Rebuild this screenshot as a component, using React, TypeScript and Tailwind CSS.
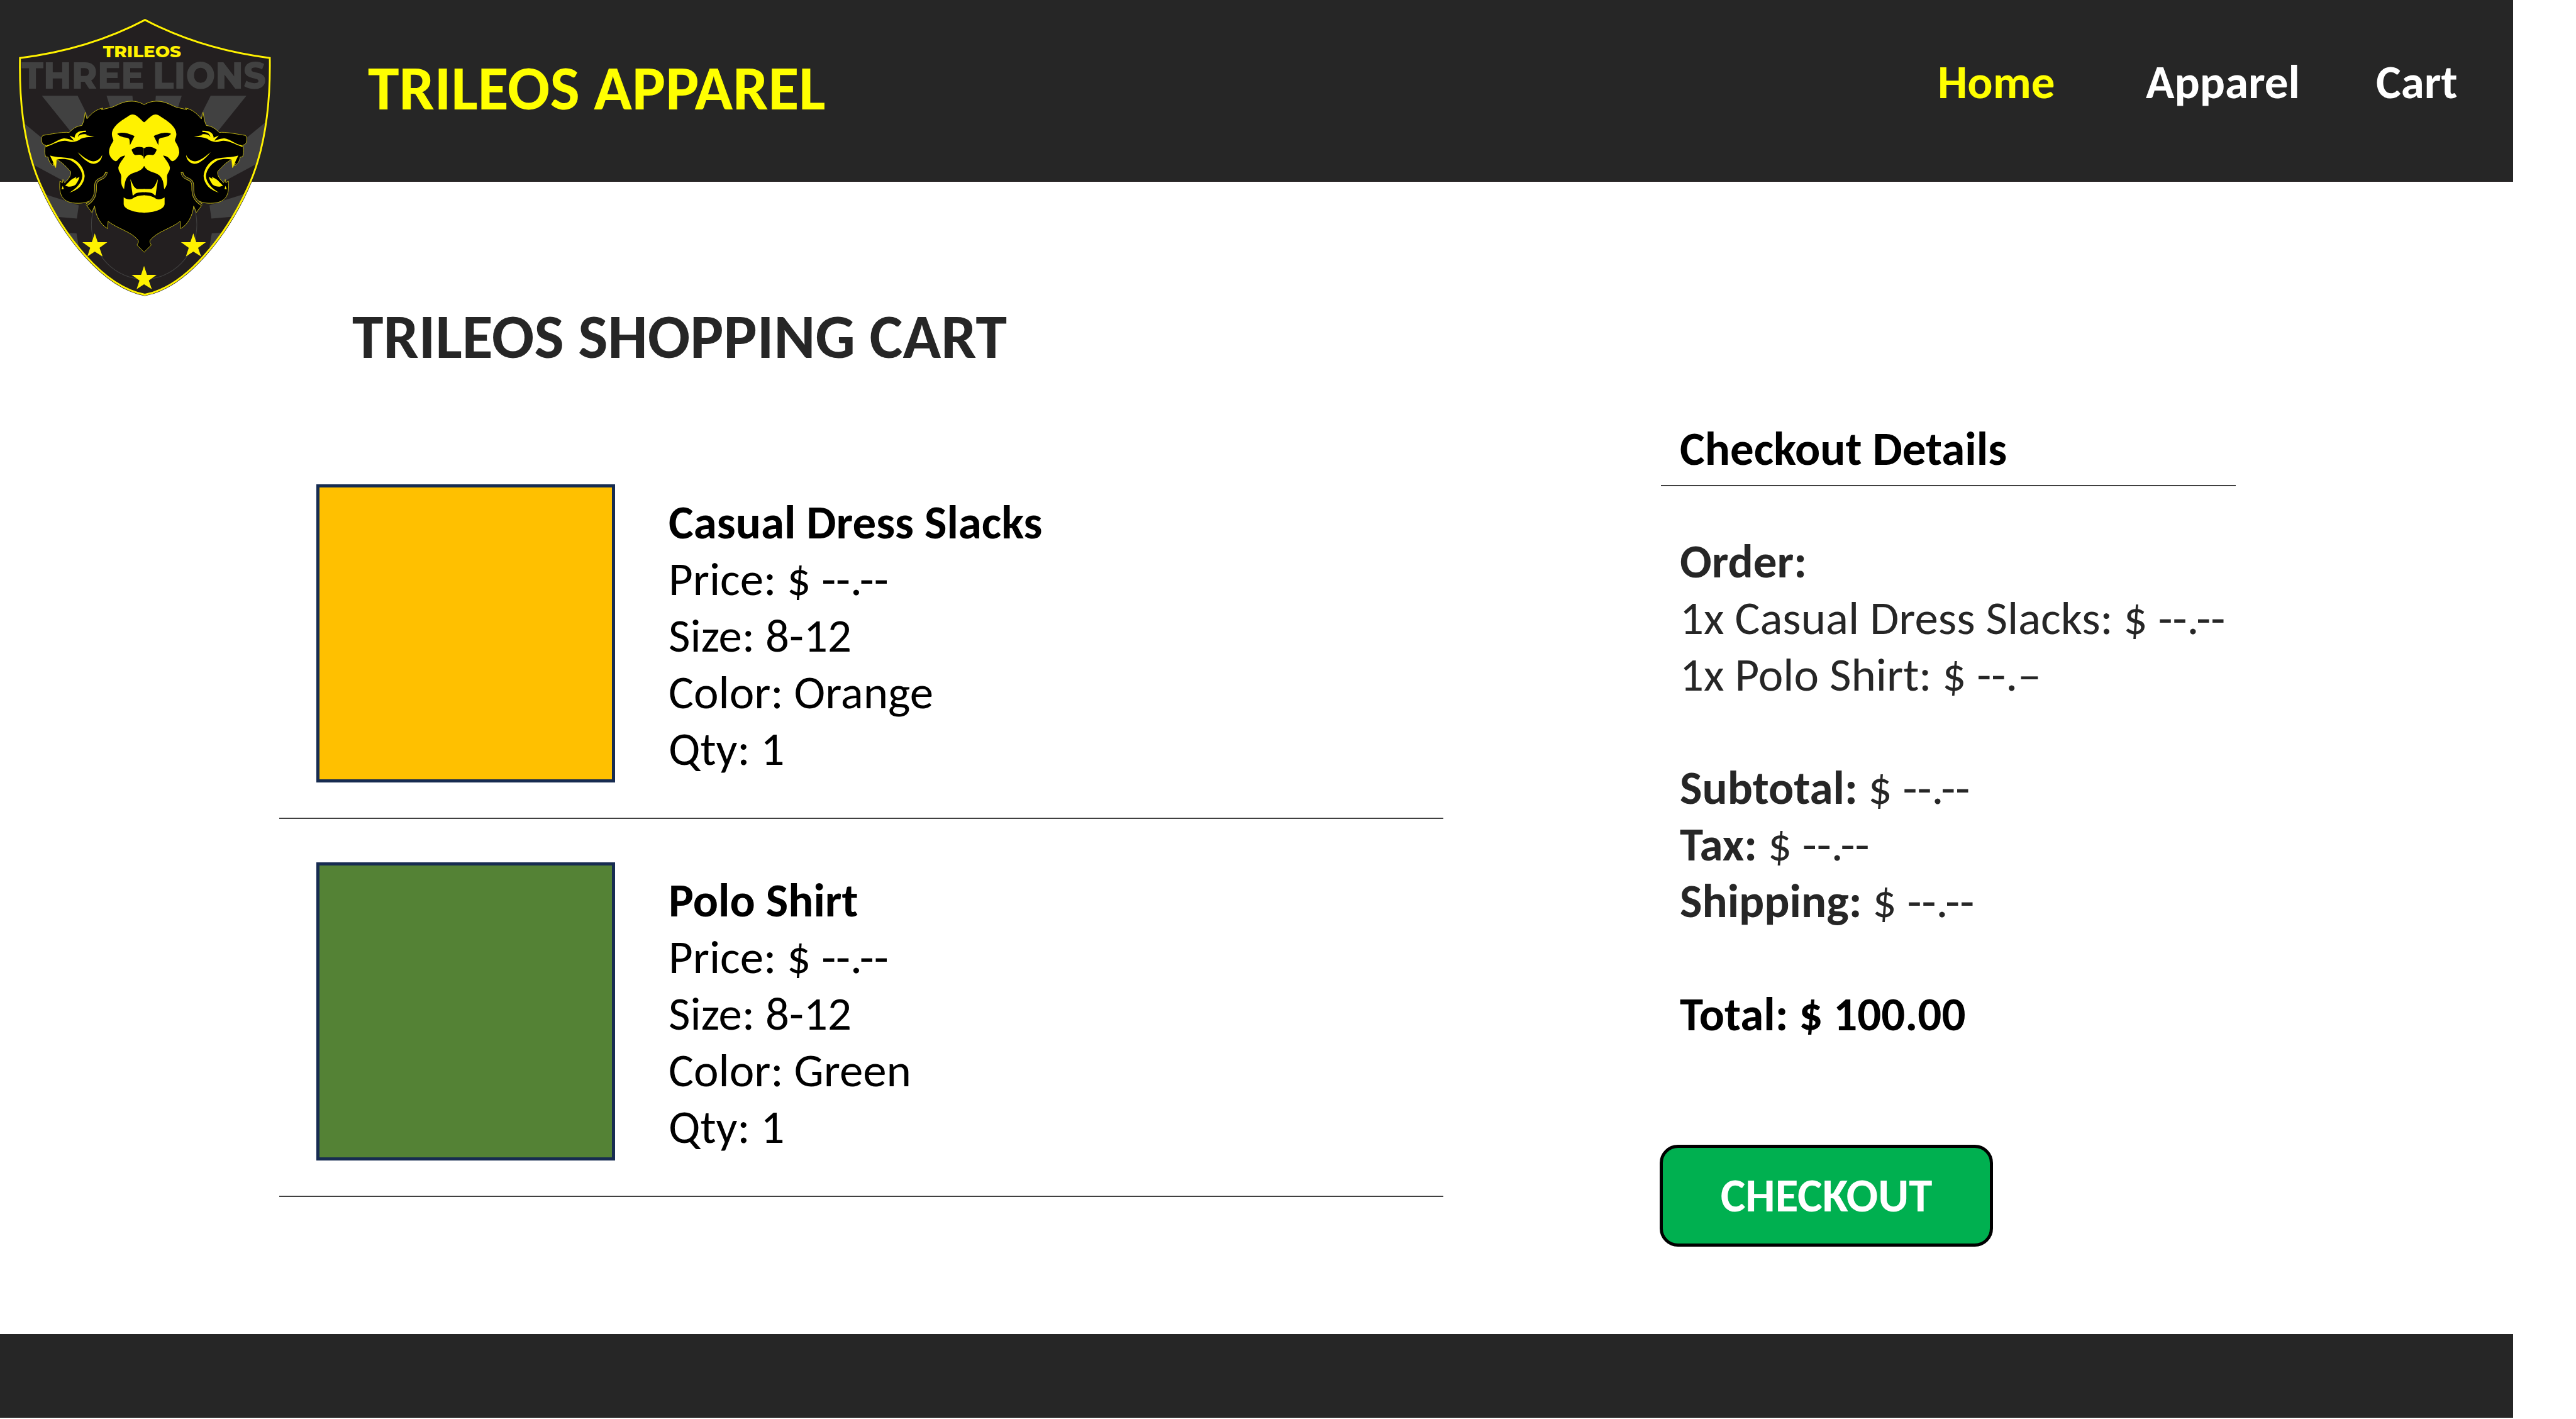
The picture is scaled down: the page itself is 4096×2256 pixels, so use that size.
const SHIELD =
  "M762 101Q470 250 105 295C100 560 135 780 222 960C330 1190 540 1460 761 1499C982 1460 1192 1190 1300 960C1387 780 1422 560 1418 295Q1054 250 762 101Z";
const STAR = "M0 -65L15.500 -20H66L25 9L41 53L0 28L-39 53L-24 9L-65 -20H-15.500Z";
const MIRROR = "translate(1515 0) scale(-1 1)";

function Rays() {
  return (
    <g fill="#414141">
      <path d="M220 487H408L560 780L480 800Z" />
      <path d="M560 487H696L702 560L590 580Z" />
      <path d="M100 606L400 845V955L160 830Z" />
      <path d="M210 981L340 1020L414 1045L404 1112L270 1101Z" />
      <path d="M330 1183L402 1187L414 1255V1300H390Z" />
    </g>
  );
}

function Mane() {
  return (
    <g>
      <path
        fill="#000"
        stroke="#c9bd12"
        strokeWidth="3"
        d="M757.500 533C735 519 712 515 690 515C645 515 615 536 590 545L533 558L542 550C510 553 478 578 457 605L448 571L440 615L431 638C398 643 383 655 363 674L350 673C315 673 270 682 225 689C215 700 216 725 228 735L240 739C234 755 233 780 240 797L253 800C256 818 264 834 281 843L278 830L293 853L298 811C330 828 350 850 371 873C374 892 362 910 340 930L331 913L328 930L315 921C308 990 325 1034 410 1034C440 1034 465 1028 482 1016L452 1041L483 1081L497 1048C503 1100 530 1145 566 1163L568 1126C620 1165 690 1178 726 1222C732 1240 716 1240 723 1250L757.500 1283"
      />
      <path fill="#000" d="M750 536H765V1270H750Z" />
      <path fill="none" stroke="#c9bd12" strokeWidth="13" d="M559 876C556 896 543 904 530 909C508 918 502 926 502 950C503 990 496 1015 456 1041" />
      <path fill="none" stroke="#231f20" strokeWidth="7" d="M559 879C556 896 543 904 530 909C508 918 502 926 502 950C503 990 496 1015 453 1043" />
    </g>
  );
}

function Features() {
  return (
    <g>
      <g transform="translate(180 435.6) scale(1 .968)" fill="#fff200">
        <path d="M60 323C60 318 62 316 66 314C100 306 125 282 155 277C175 276 188 284 207 290C204 278 190 272 186 262L212 274C214 252 228 236 272 237L271 244C248 243 233 250 229 270C238 256 255 253 277 256L268 260L316 268C285 271 262 270 244 280C230 294 200 300 180 293C160 286 140 292 122 298C100 306 85 314 60 323Z" />
        <path d="M228 350C250 368 285 398 310 398C335 396 350 380 357 364C357 385 340 410 312 411C285 411 250 378 228 350Z" />
        <path d="M83 367C110 378 170 375 200 385C240 400 262 440 265 475C262 520 230 550 185 562C215 545 250 515 253 475C250 440 225 410 190 392C165 384 140 384 117 389L113 432L100 405C95 390 88 380 83 367Z" />
        <path d="M163 525C180 510 190 495 205 488L222 480L218 490L238 480C232 500 225 510 218 520C200 532 180 535 163 525Z" />
        <path d="M150 527L155 543L143 545Z" />
      </g>
      <g transform="translate(480 464.7) scale(1 .968)" fill="#fff200">
        <path d="M277.500 163C262 152 245 130 230 124C215 119 205 122 195 130C165 150 110 180 108 225C108 240 115 250 116 258C110 275 93 290 93 322C95 345 115 365 128 367C144 366 140 342 178 337C165 360 148 375 142 400C142 425 160 430 157 455C155 480 158 500 172 514C176 490 175 460 200 440C225 422 262 425 277.500 392L280 392V163Z" />
        <path fill="#000" d="M136 223C155 214 185 215 227 235L203 283L201 258C200 240 175 245 165 240C150 236 142 230 136 223Z" />
        <path fill="#000" d="M280 299H277.500C262 288 235 288 211 307C218 320 220 333 232 335C250 333 268 328 277.500 354H280Z" />
        <path d="M205 461C215 480 220 505 240 513L280 513L280 530C255 531 235 530 222 546L217 546C214 515 208 490 205 461Z" />
        <path d="M170 557C190 570 208 572 225 558C240 549 258 546 280 546L280 638C235 638 170 622 170 592Z" />
      </g>
    </g>
  );
}

function Logo({ className }: { className: string }) {
  return (
    <svg className={className} viewBox="0 0 1560 1568" preserveAspectRatio="none">
      <defs>
        <clipPath id="shield">
          <path d={SHIELD} />
        </clipPath>
      </defs>
      <path d={SHIELD} fill="#231f20" stroke="#231f20" strokeWidth="14" />
      <g clipPath="url(#shield)">
        <Rays />
        <g transform={MIRROR}>
          <Rays />
        </g>
      </g>
      <circle cx="757.500" cy="1143" r="277" fill="none" stroke="#414141" strokeWidth="3.500" />
      <path d={SHIELD} fill="none" stroke="#fff200" strokeWidth="9.500" />
      <Mane />
      <g transform={MIRROR}>
        <Mane />
      </g>
      <Features />
      <g transform={MIRROR}>
        <Features />
      </g>
      <g fill="#fff200">
        <path d={STAR} transform="translate(498 1252)" />
        <path d={STAR} transform="translate(1016 1252)" />
        <path d={STAR} transform="translate(757 1418)" />
      </g>
      <g fontFamily="Montserrat, Inter, sans-serif" fontWeight="800">
        <text x="541" y="290" fontSize="83" textLength="411" lengthAdjust="spacingAndGlyphs" fill="#fff200">
          TRILEOS
        </text>
        <text x="112" y="452" fontSize="191" wordSpacing="-10" textLength="1286" lengthAdjust="spacingAndGlyphs" fill="#414141">
          THREE LIONS
        </text>
      </g>
    </svg>
  );
}

type Item = { name: string; lines: string[]; swatch: string };

const items: Item[] = [
  { name: "Casual Dress Slacks", lines: ["Price: $ --.--", "Size: 8-12", "Color: Orange", "Qty: 1"], swatch: "bg-[#ffc000]" },
  { name: "Polo Shirt", lines: ["Price: $ --.--", "Size: 8-12", "Color: Green", "Qty: 1"], swatch: "bg-[#548235]" },
];

function CartItem({ item }: { item: Item }) {
  return (
    <li className="mb-[69px] w-[1851px] border-b-2 border-[#404040] pb-[56px] pl-[59px]">
      <div className="flex h-[474px]">
        <div className={`h-[474px] w-[475px] border-[5px] border-[#172c51] ${item.swatch}`} />
        <div className="ml-[85px] pt-[16px] whitespace-nowrap">
          <h2 className="font-bold">{item.name}</h2>
          {item.lines.map((line) => (
            <p key={line}>{line}</p>
          ))}
        </div>
      </div>
    </li>
  );
}

export default function App() {
  return (
    <div className="relative flex h-[2256px] w-[4096px] flex-col overflow-hidden bg-white font-[Calibri,Carlito,Lato,sans-serif] text-[75px] leading-[90px] text-black">
      <header className="flex h-[289px] w-[3996px] shrink-0 justify-between border-b border-[#231f20] bg-[#262626]">
        <h1 className="pt-[80px] pl-[585px] text-[100px] leading-[120px] font-bold text-[#ffff00]">TRILEOS APPAREL</h1>
        <nav className="flex w-[915px] pt-[86px] font-bold text-white">
          <a className="w-[331px] text-[#ffff00]">Home</a>
          <a className="w-[366px]">Apparel</a>
          <a>Cart</a>
        </nav>
      </header>

      <main className="flex h-[1832px] shrink-0">
        <section className="w-[2639px] pt-[186px]">
          <h2 className="pl-[560px] text-[100px] leading-[120px] font-bold text-[#262626]">TRILEOS SHOPPING CART</h2>
          <ul className="mt-[175px] pl-[444px]">
            {items.map((item) => (
              <CartItem key={item.name} item={item} />
            ))}
          </ul>
        </section>

        <section className="w-[916px] pt-[380px] whitespace-nowrap text-[#262626]">
          <h2 className="ml-[2px] border-b-2 border-[#404040] pb-[12px] pl-[30px] font-bold text-black">Checkout Details</h2>
          <div className="mt-[75px] pl-[32px]">
            <h3 className="font-bold">Order:</h3>
            <p>1x Casual Dress Slacks: $ --.--</p>
            <p>1x Polo Shirt: $ --.–</p>
            <p className="mt-[90px]">
              <b>Subtotal:</b> $ --.--
            </p>
            <p>
              <b>Tax:</b> $ --.--
            </p>
            <p>
              <b>Shipping:</b> $ --.--
            </p>
            <p className="mt-[90px] font-bold text-black">Total: $ 100.00</p>
          </div>
          <button className="mt-[162px] flex h-[162px] w-[530px] items-center justify-center rounded-[29px] border-[5px] border-black bg-[#00b050] font-bold text-white">
            CHECKOUT
          </button>
        </section>
      </main>

      <footer className="h-[133px] w-[3996px] shrink-0 bg-[#262626]" />

      <Logo className="absolute top-0 left-0 h-[490px] w-[472px]" />
    </div>
  );
}
